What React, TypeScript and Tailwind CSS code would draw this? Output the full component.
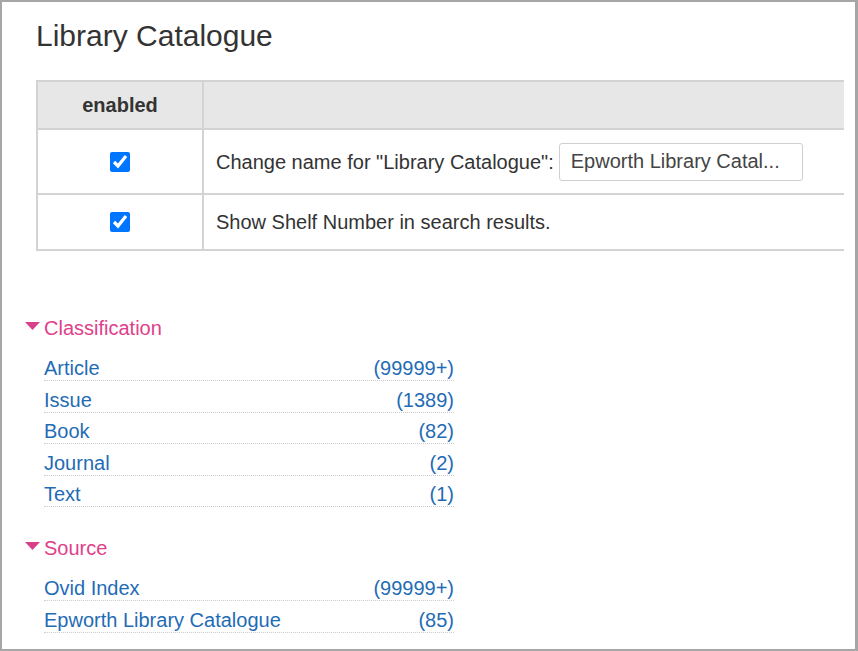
import type { ReactNode } from 'react';

interface FacetItem {
  label: string;
  count: string;
}

const classification: FacetItem[] = [
  { label: 'Article', count: '(99999+)' },
  { label: 'Issue', count: '(1389)' },
  { label: 'Book', count: '(82)' },
  { label: 'Journal', count: '(2)' },
  { label: 'Text', count: '(1)' },
];

const sources: FacetItem[] = [
  { label: 'Ovid Index', count: '(99999+)' },
  { label: 'Epworth Library Catalogue', count: '(85)' },
];

function Facet({ title, items, className }: { title: string; items: FacetItem[]; className?: string }) {
  return (
    <div className={className}>
      {/* Heading with caret */}
      <div className="flex items-center h-[28px] text-[20px] leading-[28px] text-[#e0408a]">
        <svg width="15" height="8" viewBox="0 0 15 8" className="shrink-0 mr-[4px] -mt-[4px]">
          <polygon points="0,0 15,0 7.5,8" fill="#d9408a" />
        </svg>
        <span>{title}</span>
      </div>
      <ul className="mt-[7.5px] ml-[19px] w-[410px]">
        {items.map((item) => (
          <li
            key={item.label}
            className="flex justify-between pt-[6.5px] leading-[24px] text-[20px] text-[#1f6cb5] border-b border-dotted border-[#cccccc]"
          >
            <span>{item.label}</span>
            <span>{item.count}</span>
          </li>
        ))}
      </ul>
    </div>
  );
}

function Row({ children, height }: { children: ReactNode; height: string }) {
  return (
    <div className={`flex border-b-2 border-[#d3d3d3] ${height}`}>
      <div className="w-[166px] shrink-0 flex items-center justify-center border-r-2 border-[#d3d3d3]">
        <input type="checkbox" checked readOnly className="w-[20px] h-[20px] accent-[#0075ff]" />
      </div>
      <div className="flex-1 flex items-center pl-[12px]">{children}</div>
    </div>
  );
}

export default function App() {
  return (
    <div
      className="w-[858px] h-[651px] bg-white border-2 border-r-[3px] border-[#a6a6a6] overflow-hidden text-[#333]"
      style={{ fontFamily: '"Liberation Sans", Arial, sans-serif' }}
    >
      <h1 className="pt-[16px] pl-[34px] text-[30px] leading-[36px] font-normal text-[#333]">Library Catalogue</h1>

      {/* Settings table */}
      <div className="mt-[26px] ml-[34px] w-[808px] border-l-2 border-t-2 border-[#d3d3d3] text-[20px]">
        <div className="flex h-[48px] bg-[#e7e7e7] border-b-2 border-[#d3d3d3]">
          <div className="w-[166px] shrink-0 flex items-center justify-center font-bold border-r-2 border-[#d3d3d3]">
            enabled
          </div>
          <div className="flex-1" />
        </div>
        <Row height="h-[65px]">
          <span>Change name for "Library Catalogue":</span>
          <input
            type="text"
            readOnly
            value="Epworth Library Catal..."
            className="ml-[5px] w-[244px] h-[38px] border border-[#cfcfcf] rounded-[3px] pl-[11px] text-[20px] text-[#444] outline-none"
          />
        </Row>
        <Row height="h-[56px]">
          <span>Show Shelf Number in search results.</span>
        </Row>
      </div>

      {/* Facets */}
      <div className="pl-[23px]">
        <Facet title="Classification" items={classification} className="mt-[63px]" />
        <Facet title="Source" items={sources} className="mt-[27px]" />
      </div>
    </div>
  );
}
